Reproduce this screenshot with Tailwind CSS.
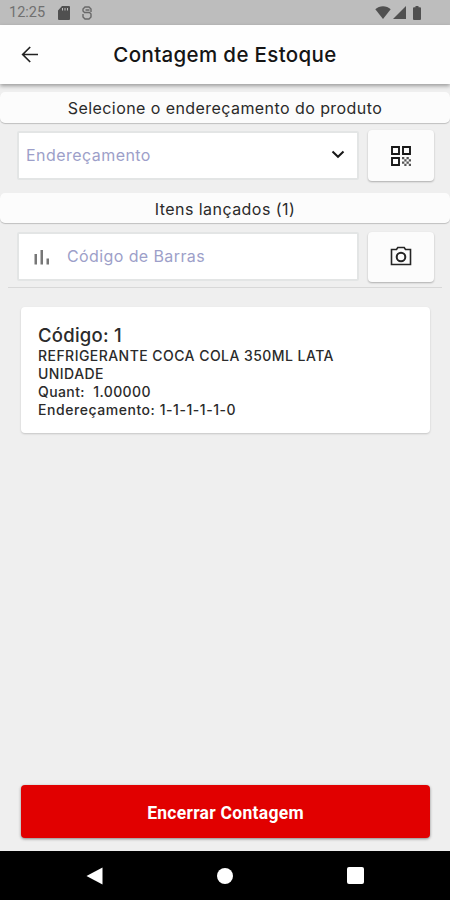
<!DOCTYPE html>
<html lang="pt-BR">
<head>
<meta charset="utf-8">
<title>Contagem de Estoque</title>
<script src="https://cdn.jsdelivr.net/npm/@tailwindcss/browser@4"></script>
</head>
<body class="w-[450px] h-[900px] overflow-hidden bg-[#efefef] font-['Inter',sans-serif] text-[#2a2a2a] flex flex-col whitespace-nowrap">
  <!-- Status bar -->
  <div class="h-[25px] shrink-0 bg-[#bdbdbd] flex items-center pl-[9px] pr-[29px] text-[#505050]">
    <span class="font-['Roboto',sans-serif] text-[14.500px] leading-none w-[49px] pt-[2px] text-[#707070]">12:25</span>
    <svg class="w-[12px] h-[14px]" viewBox="0 0 12 14" fill="currentColor"><path fill-rule="evenodd" d="M4 0h7a1 1 0 0 1 1 1v12a1 1 0 0 1-1 1H1a1 1 0 0 1-1-1V4.500zM4 2v2.500h1V2zM6.500 2v2.500h1V2zM9 2v2.500h1V2z"/></svg>
    <svg class="w-[10px] h-[14px] ml-[12px]" viewBox="0 0 10 14" fill="none" stroke="#686868" stroke-width="1.400"><path d="M9 4.500V3L7 1H3L1 3v2l1.500 1.500h5L9 8v3l-2 2H3L1 11V8M3.500 4h4M9 6V4.500"/></svg>
    <svg class="w-[16px] h-[13px] ml-auto" viewBox="0 0 16 13" fill="currentColor"><path d="M8 13 .3 3.300C4.500-.7 11.500-.7 15.700 3.300z"/></svg>
    <svg class="w-[13px] h-[13px] ml-[2px]" viewBox="0 0 13 13" fill="currentColor"><path d="M13 0v13H0z"/></svg>
    <svg class="w-[8px] h-[14px] ml-[7px]" viewBox="0 0 8 14" fill="currentColor"><path d="M2.500 0h3v1.300H7a1 1 0 0 1 1 1V13a1 1 0 0 1-1 1H1a1 1 0 0 1-1-1V2.300a1 1 0 0 1 1-1h1.500z"/></svg>
  </div>
  <!-- App bar -->
  <header class="relative h-[59px] shrink-0 bg-[#fefefe] shadow-[0_2px_4px_rgba(0,0,0,0.35)] flex items-center justify-center">
    <svg class="absolute left-[21px] top-[21px] w-[18px] h-[17px]" viewBox="0 0 18 17" fill="none" stroke="#222" stroke-width="1.700"><path d="M17 8.500H2M9.200 1 1.700 8.500l7.500 7.500"/></svg>
    <h1 class="text-[20.500px] leading-6 font-medium tracking-[0.350px] text-[#151515]">Contagem de Estoque</h1>
  </header>

  <section class="h-[31px] mt-[8px] shrink-0 rounded-[5px] bg-[#fcfcfc] shadow-[0_1px_1px_rgba(0,0,0,0.2)] flex items-center justify-center text-[16px]">
    <span class="tracking-[0.430px]">Selecione o endereçamento do produto</span>
  </section>
  <div class="mt-[7px] h-[52px] shrink-0 pl-[17px] pr-[16px] flex justify-between">
    <div class="w-[342px] h-[49px] mt-px bg-white border-2 border-[#e3e5e5] rounded-[2px] flex items-center justify-between pl-[7px] pr-[12px]">
      <span class="text-[16px] tracking-[0.450px] text-[#9d9fc9] -mt-px">Endereçamento</span>
      <svg class="w-[14px] h-[9px] -mt-[2px]" viewBox="0 0 14 9" fill="none" stroke="#181818" stroke-width="2"><path d="m1.500 1.500 5.500 5.300 5.500-5.300"/></svg>
    </div>
    <button class="w-[66px] h-[51px] rounded-[4px] bg-[#fcfcfc] shadow-[0_1px_2px_rgba(0,0,0,0.28)] flex items-center justify-center">
      <svg class="w-[20px] h-[20px]" viewBox="0 0 20 20"><g fill="none" stroke="#181818" stroke-width="1.900"><path d="M1 1h7v7H1zM12 1h7v7h-7zM1 12h7v7H1z"/></g><path fill="#555" d="M11 11h2.300v2.300H11zM13.300 13.300h2.200v2.200h-2.200zM15.500 11h2.300v2.300h-2.300zM17.800 13.300H20v2.200h-2.200zM11 15.500h2.300v2.300H11zM13.300 17.800h2.200V20h-2.200zM15.500 15.500h2.300v2.300h-2.300zM17.800 17.800H20V20h-2.200z"/></svg>
    </button>
  </div>

  <section class="h-[30px] mt-[11px] shrink-0 rounded-[5px] bg-[#fcfcfc] shadow-[0_1px_1px_rgba(0,0,0,0.2)] flex items-center justify-center text-[16px]">
    <span class="tracking-[0.450px] pt-px">Itens lançados (1)</span>
  </section>
  <div class="mt-[9px] h-[50px] shrink-0 pl-[17px] pr-[16px] flex justify-between">
    <div class="w-[342px] h-[49px] bg-white border-2 border-[#e3e5e5] rounded-[2px] flex items-center pl-[15px]">
      <svg class="w-[16px] h-[16px]" viewBox="0 0 16 16" fill="#777"><path d="M.5 5H3v10.500H.5zM6.500 1H9v14.500H6.500zM12.500 9.500H15v6h-2.500z"/></svg>
      <span class="ml-[17px] text-[16px] tracking-[0.400px] text-[#9d9fc9] -mt-px">Código de Barras</span>
    </div>
    <button class="w-[66px] h-[50px] rounded-[4px] bg-[#fcfcfc] shadow-[0_1px_2px_rgba(0,0,0,0.28)] flex items-center justify-center">
      <svg class="w-[22px] h-[20px] -mt-[2px]" viewBox="0 0 22 20" fill="none" stroke="#252525" stroke-width="1.600"><path d="M1.500 3.500h5l1.300-2h6.400l1.300 2h5v15h-19z"/><circle cx="11" cy="11" r="4.300" stroke-width="2"/></svg>
    </button>
  </div>
  <div class="mt-[5px] mx-[8px] h-px shrink-0 bg-[#d8d8d8]"></div>

  <article class="mt-[19px] ml-[21px] mr-[20px] h-[126px] shrink-0 rounded-[4px] bg-white shadow-[0_1px_2px_rgba(0,0,0,0.18)] pt-[16px] pl-[17px] font-medium text-[14px] leading-[18px] text-[#2b2b2b]">
    <h2 class="text-[18.500px] leading-[24px] h-[23.500px] tracking-[0.250px]"><span>Código: 1</span></h2>
    <p><span class="tracking-[0.450px]">REFRIGERANTE COCA COLA 350ML LATA</span></p>
    <p><span class="tracking-[0.450px]">UNIDADE</span></p>
    <p><span class="tracking-[0.400px]">Quant: &nbsp;1.00000</span></p>
    <p><span class="tracking-[0.550px]">Endereçamento: 1-1-1-1-1-0</span></p>
  </article>

  <button class="mt-auto mb-[13px] ml-[21px] mr-[20px] h-[53px] shrink-0 rounded-[4px] bg-[#e10000] shadow-[0_1px_3px_rgba(0,0,0,0.45)] font-['Roboto',sans-serif] font-bold text-[17.500px] text-white pt-[3px]"><span class="tracking-[0.280px]">Encerrar Contagem</span></button>

  <!-- System navigation -->
  <nav class="h-[49px] shrink-0 bg-black flex items-center justify-between pl-[86px] pr-[86px]">
    <svg class="w-[17px] h-[18px]" viewBox="0 0 17 18" fill="#fff"><path d="M16.500.5v17L.5 9z"/></svg>
    <div class="w-[16px] h-[16px] rounded-full bg-white"></div>
    <div class="w-[17px] h-[17px] rounded-[2px] bg-white"></div>
  </nav>
</body>
</html>
